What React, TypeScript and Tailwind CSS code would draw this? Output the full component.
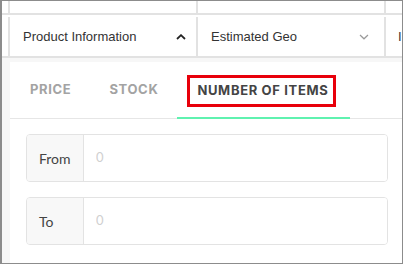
import React from "react";

const ChevronUp = () => (
  <svg width="10" height="6" viewBox="0 0 10 6" fill="none">
    <path d="M1 5L5 1.2L9 5" stroke="#222" strokeWidth="1.8" />
  </svg>
);

const ChevronDown = () => (
  <svg width="10" height="6" viewBox="0 0 10 6" fill="none">
    <path d="M1 1L5 4.8L9 1" stroke="#9a9a9a" strokeWidth="1.2" />
  </svg>
);

const RangeInput = ({ label }: { label: string }) => (
  <div className="flex h-[48px] rounded-[4px] border border-[#e3e3e3] overflow-hidden">
    <div className="w-[57px] flex items-center pl-[12px] bg-[#f8f8f8] border-r border-[#e3e3e3] text-[14px] text-[#444]">
      {label}
    </div>
    <input
      className="flex-1 pl-[12px] text-[13px] outline-none placeholder:text-[#d0d0d0] bg-white"
      placeholder="0"
    />
  </div>
);

const App = () => {
  return (
    <div
      className="w-[403px] h-[264px] border border-l-2 border-[#8c8c8c] bg-white flex flex-col overflow-hidden"
      style={{ fontFamily: "Lato, 'Noto Sans', sans-serif" }}
    >
      {/* top table row */}
      <div className="h-[12px] flex shrink-0">
        <div className="w-[8px] border-r-2 border-[#e2e2e2]" />
        <div className="w-[188px] border-r-2 border-[#e2e2e2]" />
        <div className="w-[188px] border-r-2 border-[#e2e2e2]" />
        <div className="flex-1" />
      </div>

      {/* header row */}
      <div
        className="h-[45px] flex shrink-0 border-y-2 border-[#e2e2e2] bg-white text-[13px] text-[#333] pt-[2px]"
        style={{ fontFamily: "'Liberation Sans', Arial, sans-serif" }}
      >
        <div className="w-[8px] border-r-2 border-[#e2e2e2]" />
        <div className="w-[188px] border-r-2 border-[#e2e2e2] flex items-center justify-between pl-[13px] pr-[10px]">
          <span>Product Information</span>
          <ChevronUp />
        </div>
        <div className="w-[188px] border-r-2 border-[#e2e2e2] flex items-center justify-between pl-[13px] pr-[15px]">
          <span>Estimated Geo</span>
          <ChevronDown />
        </div>
        <div className="flex-1 flex items-center pl-[12px]">
          <span>I</span>
        </div>
      </div>

      {/* below header */}
      <div className="flex-1 flex bg-[#f7f7f7] pt-[4px]">
        <div className="w-[8px]" />
        <div className="flex-1 bg-white flex flex-col">
          {/* tabs */}
          <div
            className="h-[57px] flex items-stretch border-b border-[#e6e6e6] pl-[1px] text-[13px] font-bold tracking-[0.05em]"
            style={{ fontFamily: "Inter, sans-serif" }}
          >
            <div className="px-[19px] flex items-center text-[#a3a3a3]">PRICE</div>
            <div className="px-[19px] flex items-center text-[#a3a3a3]">STOCK</div>
            <div className="pl-[10px] pr-[14px] flex items-center border-b-2 border-[#5ff2b0] -mb-[1px] text-[#444]">
              <span className="border-[3px] border-[#e8000b] h-[32px] flex items-center pl-[7px] pr-[5px] mt-[2px]">
                NUMBER OF ITEMS
              </span>
            </div>
          </div>

          {/* range inputs */}
          <div className="flex flex-col gap-[15px] pt-[15px] pl-[16px] pr-[14px]">
            <RangeInput label="From" />
            <RangeInput label="To" />
          </div>
        </div>
      </div>
    </div>
  );
};

export default App;
